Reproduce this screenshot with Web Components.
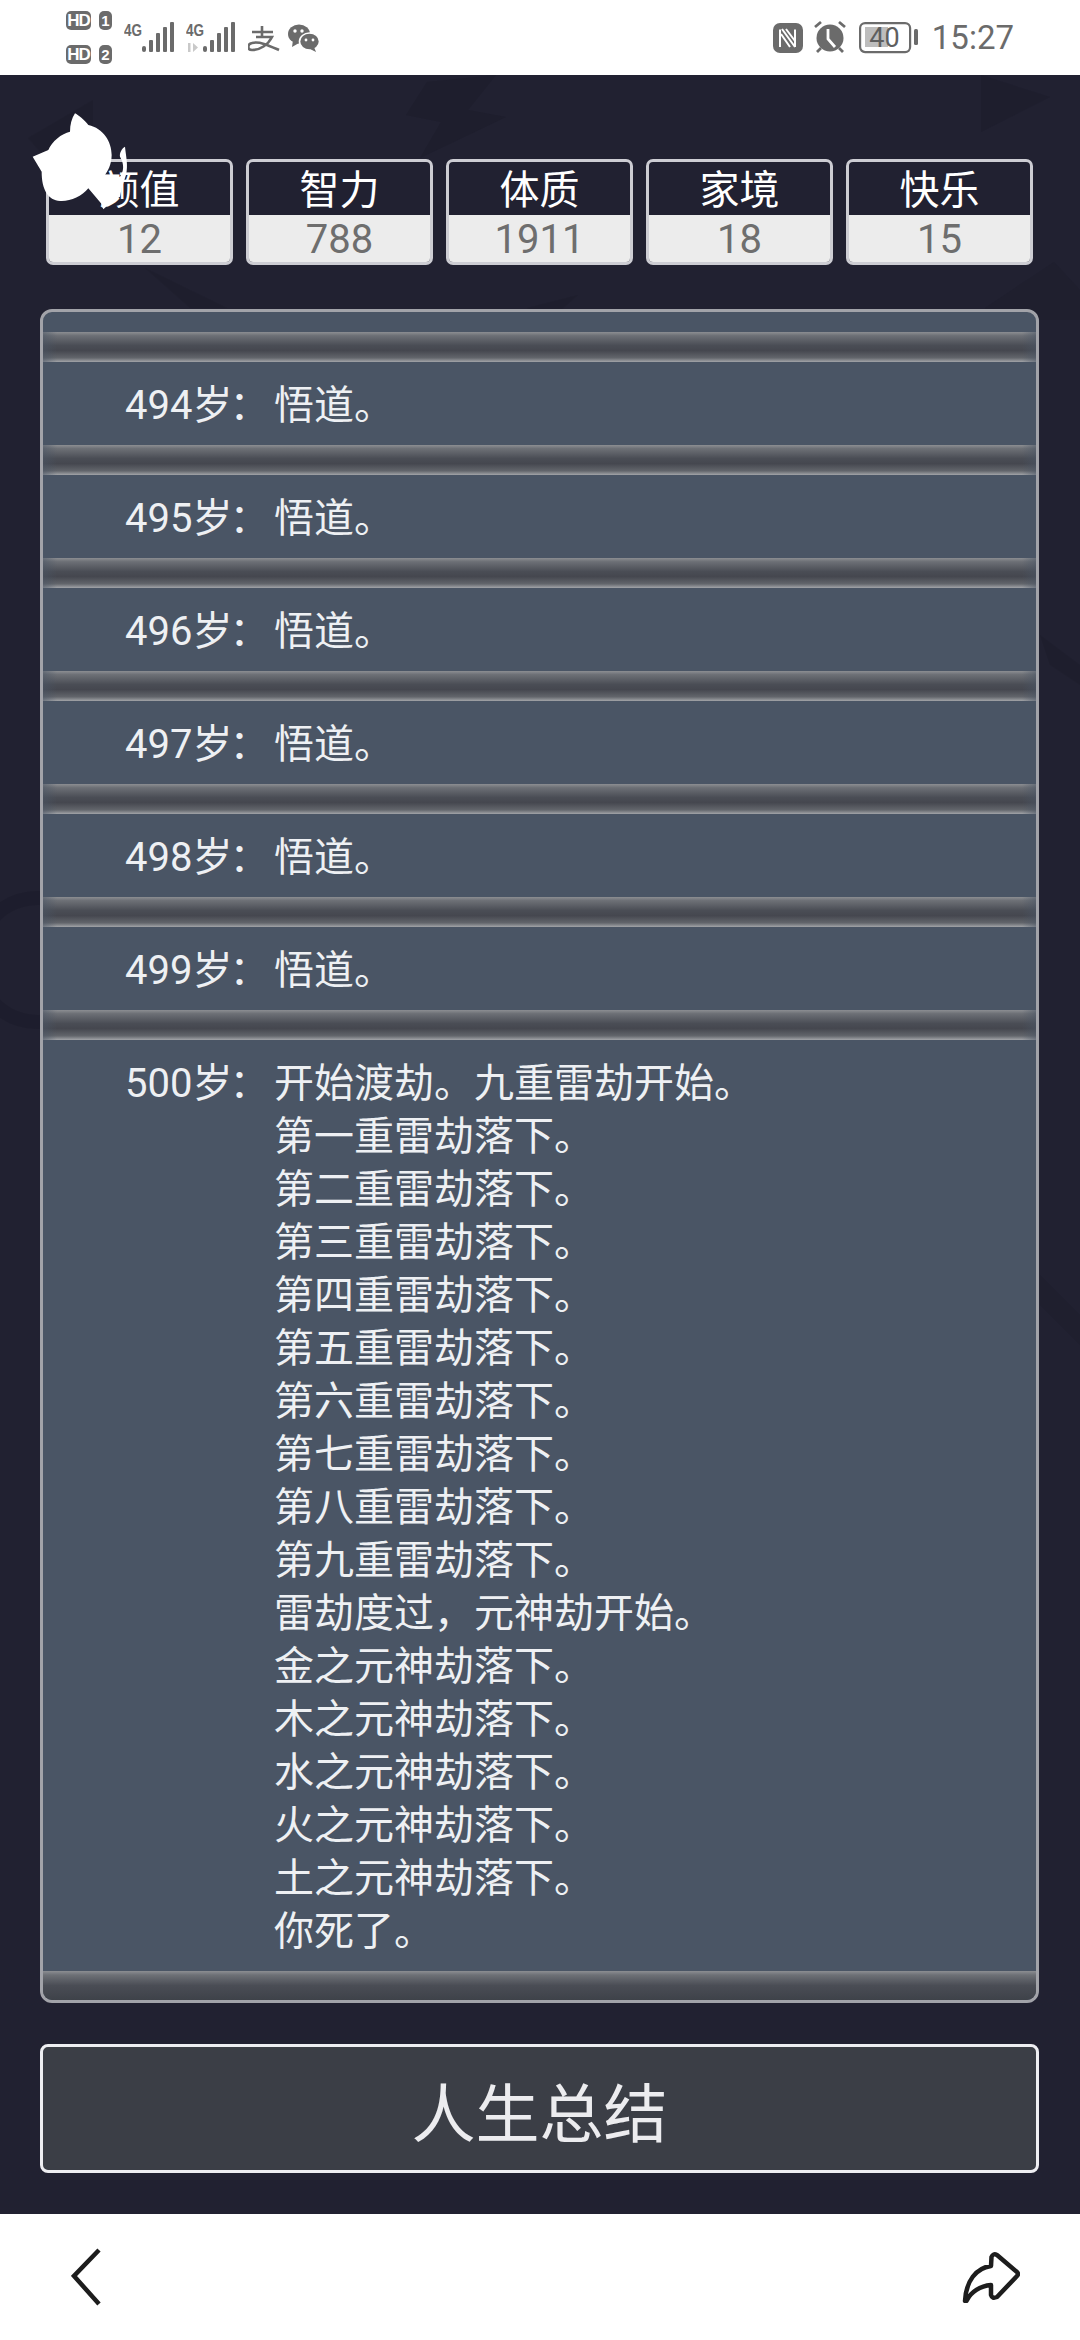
<!DOCTYPE html>
<html lang="zh">
<head>
<meta charset="utf-8">
<title>人生重开</title>
<style>
  html, body { margin: 0; padding: 0; background: #fff; }
  body { width: 1080px; height: 2340px; overflow: hidden; font-family: Roboto, "Noto Sans CJK SC", sans-serif; }
</style>
</head>
<body>
<phone-screen>
  <status-bar slot="top"></status-bar>
  <game-view>
    <cat-badge slot="badge"></cat-badge>
    <stat-card slot="stats" label="颜值" value="12"></stat-card>
    <stat-card slot="stats" label="智力" value="788"></stat-card>
    <stat-card slot="stats" label="体质" value="1911"></stat-card>
    <stat-card slot="stats" label="家境" value="18"></stat-card>
    <stat-card slot="stats" label="快乐" value="15"></stat-card>
    <life-log slot="log">
      <log-row age="494岁">悟道。</log-row>
      <log-row age="495岁">悟道。</log-row>
      <log-row age="496岁">悟道。</log-row>
      <log-row age="497岁">悟道。</log-row>
      <log-row age="498岁">悟道。</log-row>
      <log-row age="499岁">悟道。</log-row>
      <log-row age="500岁">开始渡劫。九重雷劫开始。<br>第一重雷劫落下。<br>第二重雷劫落下。<br>第三重雷劫落下。<br>第四重雷劫落下。<br>第五重雷劫落下。<br>第六重雷劫落下。<br>第七重雷劫落下。<br>第八重雷劫落下。<br>第九重雷劫落下。<br>雷劫度过&#xFF0C;元神劫开始。<br>金之元神劫落下。<br>木之元神劫落下。<br>水之元神劫落下。<br>火之元神劫落下。<br>土之元神劫落下。<br>你死了。</log-row>
    </life-log>
    <summary-button slot="action">人生总结</summary-button>
  </game-view>
  <bottom-nav slot="bottom"></bottom-nav>
</phone-screen>

<script>
class PhoneScreen extends HTMLElement {
  constructor() {
    super();
    this.attachShadow({ mode: 'open' }).innerHTML = `
      <style>
        :host { display: flex; flex-direction: column; width: 1080px; height: 2340px; }
        ::slotted(game-view) { flex: 1; min-height: 0; }
      </style>
      <slot name="top"></slot>
      <slot></slot>
      <slot name="bottom"></slot>
    `;
  }
}

// icons are drawn 75px tall so their y values are the bar's own y values
const signal = (x) => `
  <rect x="${x}" y="46" width="4" height="6" rx="2"/>
  <rect x="${x + 7}" y="40" width="4" height="12" rx="1"/>
  <rect x="${x + 14}" y="33" width="4" height="19" rx="1"/>
  <rect x="${x + 21}" y="27" width="4" height="25" rx="1"/>
  <rect x="${x + 28}" y="22" width="4" height="30" rx="1"/>`;

class StatusBar extends HTMLElement {
  constructor() {
    super();
    this.attachShadow({ mode: 'open' }).innerHTML = `
      <style>
        :host { display: flex; align-items: center; justify-content: space-between; height: 75px; background: #fff; padding: 0 66px; box-sizing: border-box; color: #6b6b6b; flex: none; }
        .group { display: flex; align-items: center; height: 75px; }
        .sims { display: flex; flex-direction: column; gap: 15px; margin-right: 12px; }
        .sim { display: flex; gap: 8px; }
        .tag { background: #6b6b6b; color: #fff; border-radius: 5px; height: 19px; font: 700 17px/19px "Liberation Sans", sans-serif; text-align: center; }
        .hd { width: 25px; letter-spacing: -1px; }
        .n { width: 13px; font-size: 15px; }
        svg { display: block; flex: none; }
        svg text { font: 700 16px "Liberation Sans", sans-serif; fill: #6b6b6b; }
        .time { font: 400 33px/40px Roboto, sans-serif; margin-left: 14px; }
      </style>
      <div class="group">
        <div class="sims">
          <div class="sim"><span class="tag hd">HD</span><span class="tag n">1</span></div>
          <div class="sim"><span class="tag hd">HD</span><span class="tag n">2</span></div>
        </div>
        <svg width="50" height="75" viewBox="0 0 50 75" fill="#6b6b6b" style="margin-right:12px"><text x="0" y="36" textLength="18" lengthAdjust="spacingAndGlyphs">4G</text>${signal(18)}</svg>
        <svg width="50" height="75" viewBox="0 0 50 75" fill="#6b6b6b" style="margin-right:12px"><text x="0" y="36" textLength="18" lengthAdjust="spacingAndGlyphs">4G</text><path d="M2 52V43H4.500V52ZM7 52V43L12 47.500 7 52Z" fill="#c9c9c9"/>${signal(17)}</svg>
        <svg width="32" height="75" viewBox="248 0 32 75" fill="none" stroke="#6b6b6b" stroke-width="2.600" style="margin-right:8px"><path d="M252 32H273M262 26V38M256 37H272C268 45 260 50 252 50 C247 50 247 44 252 43 C260 41 270 46 279 50"/></svg>
        <svg width="32" height="75" viewBox="288 0 32 75" fill="#6b6b6b"><ellipse cx="299" cy="34" rx="11" ry="9.500"/><path d="M293 40 292 47 299 43Z"/><ellipse cx="309.500" cy="41.500" rx="10" ry="8.500" stroke="#fff" stroke-width="1.600"/><path d="M314 47 316 52 310 49Z"/><circle cx="295" cy="31" r="1.700" fill="#fff"/><circle cx="302" cy="31" r="1.700" fill="#fff"/><circle cx="306" cy="40" r="1.400" fill="#fff"/><circle cx="313" cy="40" r="1.400" fill="#fff"/></svg>
      </div>
      <div class="group">
        <svg width="30" height="75" viewBox="0 0 30 75"><rect x="0" y="23" width="30" height="30" rx="7" fill="#6b6b6b"/><path d="M7 47V29.500M9 29 22 47M13 29 22 41M22 47V29.500M8 34 17 47" fill="none" stroke="#fff" stroke-width="2"/></svg>
        <svg style="margin-left:10px" width="34" height="75" viewBox="0 0 34 75" fill="#6b6b6b"><circle cx="17" cy="38" r="13.500"/><path d="M15 29V39L22 47" fill="none" stroke="#fff" stroke-width="2.800"/><path d="M2 27 8 22M32 27 26 22M8 48 4 52M26 48 30 52" stroke="#6b6b6b" stroke-width="2.800" fill="none"/></svg>
        <svg style="margin-left:12px" width="59" height="75" viewBox="0 0 59 75"><rect x="6" y="27" width="23" height="20" fill="#bdbdbd"/><rect x="1.100" y="23.100" width="50" height="29" rx="5" fill="none" stroke="#6b6b6b" stroke-width="2.200"/><rect x="55" y="29" width="4" height="16" rx="1.500" fill="#6b6b6b"/><text x="25.500" y="47" text-anchor="middle" style="font:400 27px Roboto,sans-serif;fill:#5f5f5f">40</text></svg>
        <span class="time">15:27</span>
      </div>
    `;
  }
}

class GameView extends HTMLElement {
  constructor() {
    super();
    this.attachShadow({ mode: 'open' }).innerHTML = `
      <style>
        :host { display: block; position: relative; overflow: hidden; background: #212131; color: #fff; }
        .ink { position: absolute; inset: 0; width: 100%; height: 100%; opacity: .55; }
        .content { position: relative; display: flex; flex-direction: column; padding: 84px 41px 0 40px; }
        .stats { display: grid; grid-template-columns: repeat(5, 187px); justify-content: space-between; padding: 0 6px; }
        .log { display: block; margin-top: 44px; }
        .action { display: block; margin-top: 41px; }
      </style>
      <svg class="ink" viewBox="0 0 1080 2139" fill="#1c1c2a" aria-hidden="true">
        <path d="M427 7 496 0 468 35 506 42 420 83 441 47 406 40Z"/>
        <path d="M93 25 28 63 60 100 93 60Z" opacity=".7"/>
        <path d="M981 0 1050 22 981 57Z" opacity=".8"/>
        <path d="M145 193 227 233H190Z" opacity=".7"/>
        <path d="M527 233 578 220 550 245Z" opacity=".7"/>
        <path d="M985 233 1054 187 1080 215V245H985Z" opacity=".5"/>
        <circle cx="38" cy="885" r="62" fill="none" stroke="#1b1b2a" stroke-width="14"/>
        <path d="M1040 560 1080 590V610L1050 590Z" opacity=".7"/>
        <path d="M1040 1200 1080 1240V1270L1040 1230Z" opacity=".5"/>
      </svg>
      <div class="content">
        <div class="stats"><slot name="stats"></slot></div>
        <div class="log"><slot name="log"></slot></div>
        <div class="action"><slot name="action"></slot></div>
      </div>
      <slot name="badge"></slot>
    `;
  }
}

class CatBadge extends HTMLElement {
  constructor() {
    super();
    this.attachShadow({ mode: 'open' }).innerHTML = `
      <style>
        :host { position: absolute; left: 20px; top: 25px; width: 130px; height: 120px; z-index: 2; }
        svg { display: block; }
      </style>
      <svg width="130" height="120" viewBox="0 0 390 360" fill="#fff">
        <path d="M165 40C175 45 195 62 205 75 250 85 275 125 275 165 275 195 262 215 255 225L300 230C310 215 315 195 300 170 298 160 305 145 315 140 318 170 325 195 318 225L305 265 300 290 268 312 250 328 243 310 205 265C185 290 150 305 120 303 85 300 65 270 65 215L38 170 85 150C95 125 125 100 150 95 150 75 155 55 165 40Z"/>
      </svg>
    `;
  }
}

class StatCard extends HTMLElement {
  constructor() {
    super();
    this.attachShadow({ mode: 'open' }).innerHTML = `
      <style>
        :host { display: block; }
        .card { box-sizing: border-box; height: 106px; border: 3px solid #cdcdd3; border-radius: 7px; overflow: hidden; display: flex; flex-direction: column; text-align: center; }
        .label { height: 53px; font: 400 40px/58px Roboto, "Noto Sans CJK SC", sans-serif; color: #fff; }
        .value { flex: 1; background: #ececec; color: #6e6e6e; font: 400 40px/49px Roboto, "Noto Sans CJK SC", sans-serif; }
      </style>
      <div class="card">
        <div class="label">${this.getAttribute('label')}</div>
        <div class="value">${this.getAttribute('value')}</div>
      </div>
    `;
  }
}

class LifeLog extends HTMLElement {
  constructor() {
    super();
    this.attachShadow({ mode: 'open' }).innerHTML = `
      <style>
        :host { display: block; box-sizing: border-box; border: 3px solid #a2a3a9; border-radius: 12px; background: #4a5565; overflow: hidden; padding-top: 20px; }
        .end { height: 29px; background: linear-gradient(#8c8e92 0, #6d7076 14%, #4a4d55 50%, #3e4249 100%); }
      </style>
      <slot></slot>
      <div class="end"></div>
    `;
  }
}

class LogRow extends HTMLElement {
  constructor() {
    super();
    this.attachShadow({ mode: 'open' }).innerHTML = `
      <style>
        :host { display: block; }
        .bar { height: 30px; background:
          linear-gradient(to right, rgba(74,85,101,.55), transparent 14px, transparent calc(100% - 14px), rgba(74,85,101,.55)),
          linear-gradient(#8c8e92 0, #6d7076 12%, #4a4d55 45%, #45474f 62%, #62656b 86%, #a2a4a8 100%); }
        .row { display: grid; grid-template-columns: 149px 1fr; padding: 17px 0 13px 82px; font: 400 40px/53px Roboto, "Noto Sans CJK SC", sans-serif; color: #eef0f3; }
        .age { white-space: nowrap; }
        .colon { margin-left: -3px; }
      </style>
      <div class="bar"></div>
      <div class="row">
        <div class="age">${this.getAttribute('age')}<span class="colon">&#xFF1A;</span></div>
        <div><slot></slot></div>
      </div>
    `;
  }
}

class SummaryButton extends HTMLElement {
  constructor() {
    super();
    this.attachShadow({ mode: 'open' }).innerHTML = `
      <style>
        :host { display: flex; align-items: center; justify-content: center; box-sizing: border-box; height: 129px; border: 3px solid #eeeef2; border-radius: 8px; background: #3b3e46; color: #ececef; font: 400 64px/1 "Noto Sans CJK SC", sans-serif; }
      </style>
      <slot></slot>
    `;
  }
}

class BottomNav extends HTMLElement {
  constructor() {
    super();
    this.attachShadow({ mode: 'open' }).innerHTML = `
      <style>
        :host { display: flex; align-items: center; justify-content: space-between; height: 126px; flex: none; background: #fff; padding: 0 60px 0 71px; box-sizing: border-box; }
        svg { display: block; }
      </style>
      <svg width="30" height="58" viewBox="0 0 30 58"><path d="M28 2 3 28 28 56" fill="none" stroke="#1d1d1d" stroke-width="4.500"/></svg>
      <svg width="58" height="52" viewBox="0 0 58 52"><path d="M3 50C4 30 14 17 29 15L29.500 6Q31 2 35 4L55 21Q57 23 55 25L35 46Q30 48 29 44L29 34C18 35 9 41 5 49Q4 51 3 50Z" fill="none" stroke="#1d1d1d" stroke-width="4.500" stroke-linejoin="round"/></svg>
    `;
  }
}

customElements.define('phone-screen', PhoneScreen);
customElements.define('status-bar', StatusBar);
customElements.define('game-view', GameView);
customElements.define('cat-badge', CatBadge);
customElements.define('stat-card', StatCard);
customElements.define('life-log', LifeLog);
customElements.define('log-row', LogRow);
customElements.define('summary-button', SummaryButton);
customElements.define('bottom-nav', BottomNav);
</script>
</body>
</html>
